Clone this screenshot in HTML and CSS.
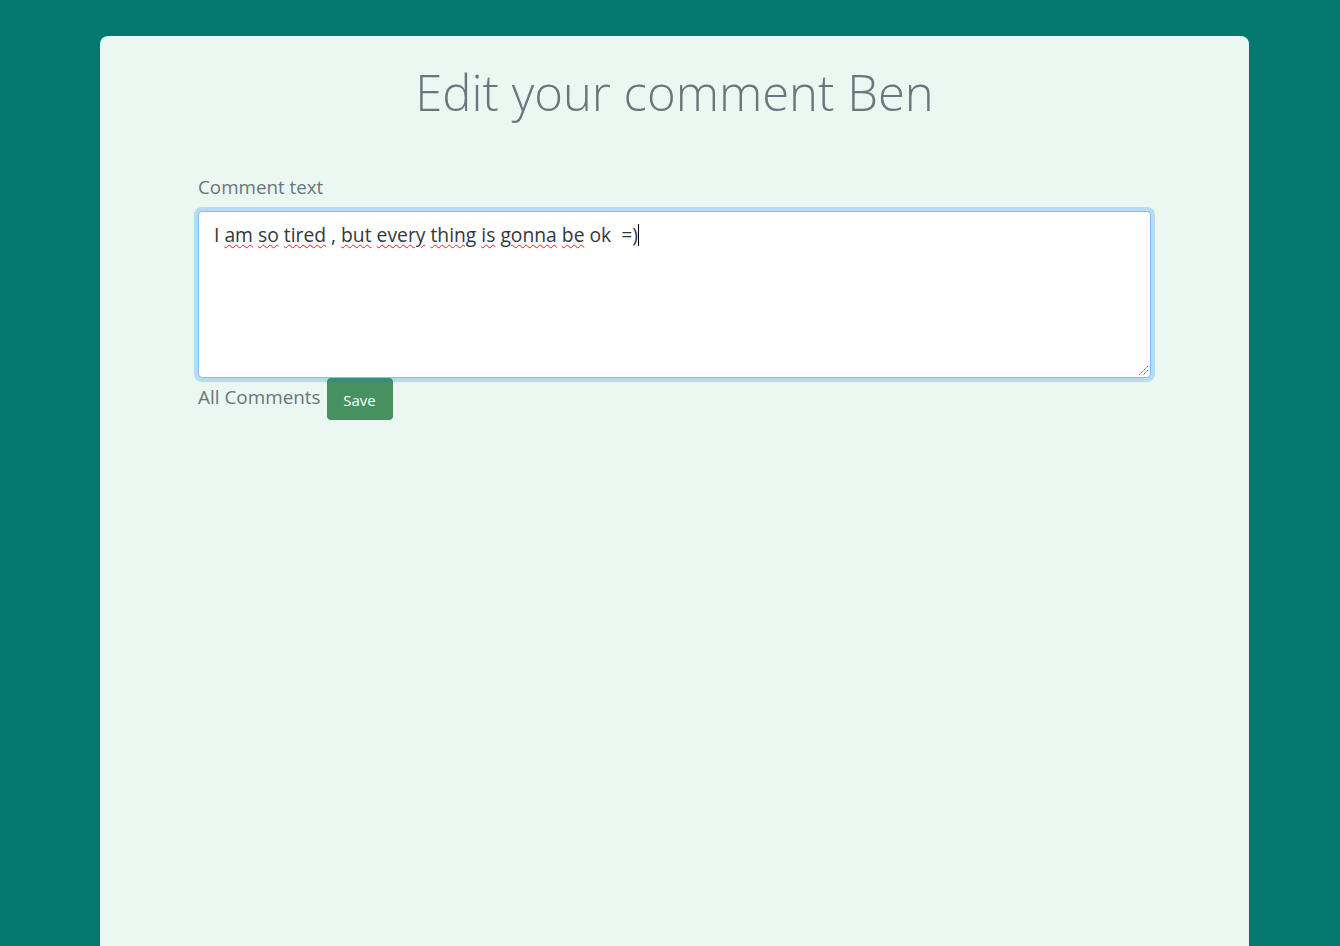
FILE: index.html
```html
<!DOCTYPE html>
<html lang="en">
<head>
<meta charset="utf-8">
<title>Edit comment</title>
<link rel="stylesheet" href="styles.css">
</head>
<body>
<main class="card">
  <h1 class="title">Edit your comment Ben</h1>
  <form class="form">
    <label class="label">Comment text</label>
    <div class="textarea" role="textbox" aria-multiline="true">
      <span class="line">I <span class="sp">am</span> <span class="sp">so</span> <span class="sp">tired</span> , <span class="sp">but</span> <span class="sp">every</span> <span class="sp">thing</span> <span class="sp">is</span> <span class="sp">gonna</span> <span class="sp">be</span> ok &nbsp;=)<span class="caret"></span></span>
      <svg class="grip" width="12" height="12" viewBox="0 0 12 12"><path d="M11 2 L2 11 M11 6 L6 11" stroke="#555" stroke-width="1" stroke-dasharray="1.4 0.8" fill="none"/></svg>
    </div>
    <div class="actions">
      <a class="back" href="#">All Comments</a>
      <button class="save" type="button">Save</button>
    </div>
  </form>
</main>
</body>
</html>
```
FILE: styles.css
```css
html, body {
  margin: 0;
  padding: 0;
}
body {
  background: #04786f;
  font-family: "Open Sans", "Noto Sans", sans-serif;
  min-height: 946px;
}
.card {
  box-sizing: border-box;
  width: 1149px;
  margin: 36px 0 0 100px;
  min-height: 910px;
  background: #eaf8f1;
  border-radius: 8px 8px 0 0;
  padding: 20px 98px 0;
}
.title {
  margin: 0;
  text-align: center;
  font-weight: 300;
  font-size: 49px;
  line-height: 72px;
  color: #6c757d;
}
.form {
  margin-top: 46px;
}
.label {
  display: block;
  font-size: 18.8px;
  line-height: 27px;
  color: #6c757d;
  margin-bottom: 10px;
}
.textarea {
  position: relative;
  box-sizing: border-box;
  height: 167px;
  background: #fff;
  border: 1px solid #80bdff;
  border-radius: 4px;
  box-shadow: 0 0 0 4px rgba(0, 123, 255, 0.22);
  padding: 9px 15px;
  font-size: 19.3px;
  line-height: 28px;
  color: #33373b;
}
.sp {
  text-decoration: underline wavy #e0201d;
  text-decoration-thickness: 1px;
  text-underline-offset: 2px;
}
.caret {
  display: inline-block;
  width: 1px;
  height: 22px;
  background: #000;
  vertical-align: -4px;
}
.grip {
  position: absolute;
  right: 1px;
  bottom: 1px;
}
.actions {
  display: flex;
  align-items: flex-start;
  gap: 6px;
}
.back {
  font-size: 18.9px;
  line-height: 27px;
  margin-top: 6px;
  color: #6c757d;
  text-decoration: none;
}
.save {
  width: 66px;
  height: 42px;
  border: 0;
  border-radius: 4px;
  background: #479161;
  color: #fff;
  font-family: inherit;
  font-size: 15px;
  padding: 1px 0 0;
}
```
